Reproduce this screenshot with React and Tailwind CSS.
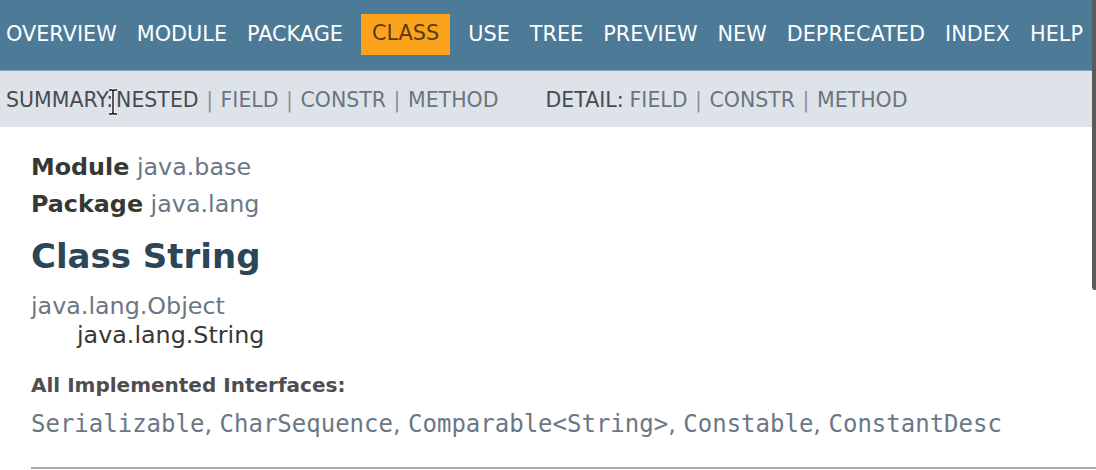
import React from 'react'

const topItems = ['Overview', 'Module', 'Package', 'Class', 'Use', 'Tree', 'Preview', 'New', 'Deprecated', 'Index', 'Help']

const mono = { fontFamily: '"DejaVu Sans Mono", monospace' }

function TopNav() {
  return (
    <div className="h-[71px] bg-[#4d7a97] border-b border-[#7fa3bf] flex items-center pl-[6px] pb-[2px]">
      <ul className="flex items-center gap-[20px] text-[20.8px] uppercase text-white">
        {topItems.map(item => item == 'Class' ? (
          <li key={item} className="bg-[#fca31d] text-[#5b3b12] px-[11px] h-[41px] flex items-center mx-[-2px]">{item}</li>
        ) : (
          <li key={item} className="leading-none">{item}</li>
        ))}
      </ul>
    </div>
  )
}

function Sep() {
  return <span className="text-[#8a939c] px-[7.5px]">|</span>
}

function SubNav() {
  return (
    <div className="h-[56px] bg-[#dee3e9] flex items-center pl-[6px] pt-[2px] text-[20.5px] uppercase">
      <div className="flex items-center">
        <span className="text-[#474b50]">Summary:</span>
        <span className="text-[#474b50] ml-[3px]">Nested</span>
        <Sep />
        <span className="text-[#6a7580]">Field</span>
        <Sep />
        <span className="text-[#6a7580]">Constr</span>
        <Sep />
        <span className="text-[#6a7580]">Method</span>
      </div>
      <div className="flex items-center ml-[47px]">
        <span className="text-[#474b50]">Detail:</span>
        <span className="text-[#6a7580] ml-[6px]">Field</span>
        <Sep />
        <span className="text-[#6a7580]">Constr</span>
        <Sep />
        <span className="text-[#6a7580]">Method</span>
      </div>
    </div>
  )
}

function Cursor() {
  return (
    <svg className="absolute left-[107px] top-[88px]" width="12" height="28" viewBox="0 0 12 28">
      <path d="M2 2h3l1 1 1-1h3M6 3v22M2 26h3l1-1 1 1h3" stroke="#fff" strokeWidth="3" fill="none" />
      <path d="M2 2h3l1 1 1-1h3M6 3v22M2 26h3l1-1 1 1h3" stroke="#111" strokeWidth="1.4" fill="none" />
    </svg>
  )
}

function App() {
  return (
    <div className="relative w-[1096px] h-[470px] overflow-hidden bg-white" style={{ fontFamily: '"DejaVu Sans", sans-serif' }}>
      <TopNav />
      <SubNav />
      <Cursor />
      <main className="pl-[31px] pt-[22px] text-[23.8px] text-[#353833]">
        <div className="leading-[37px]">
          <span className="font-bold">Module</span> <span className="text-[#6b7784]">java.base</span>
        </div>
        <div className="leading-[37px]">
          <span className="font-bold">Package</span> <span className="text-[#6b7784]">java.lang</span>
        </div>
        <h1 className="text-[34px] font-bold text-[#2c4557] leading-[44px] mt-[11px]">Class String</h1>
        <div className="mt-[14px] leading-[29px]">
          <div className="text-[#6b7784]">java.lang.Object</div>
          <div className="pl-[46px]">java.lang.String</div>
        </div>
        <dl className="mt-[20px]">
          <dt className="text-[20px] font-bold text-[#4e4e4e] leading-[30px]">All Implemented Interfaces:</dt>
          <dd className="mt-[8px] leading-[32px] text-[#6b7784]">
            <code className="text-[24px]" style={mono}>Serializable</code>, <code className="text-[24px]" style={mono}>CharSequence</code>, <code className="text-[24px]" style={mono}>Comparable&lt;String&gt;</code>, <code className="text-[24px]" style={mono}>Constable</code>, <code className="text-[24px]" style={mono}>ConstantDesc</code>
          </dd>
        </dl>
        <hr className="mt-[27px] border-t-2 border-[#a9a9a9]" />
      </main>
      <div className="absolute right-0 top-0 w-[4px] h-[290px] bg-[#5a5a5a] rounded-bl-[3px]" />
    </div>
  )
}

export default App
